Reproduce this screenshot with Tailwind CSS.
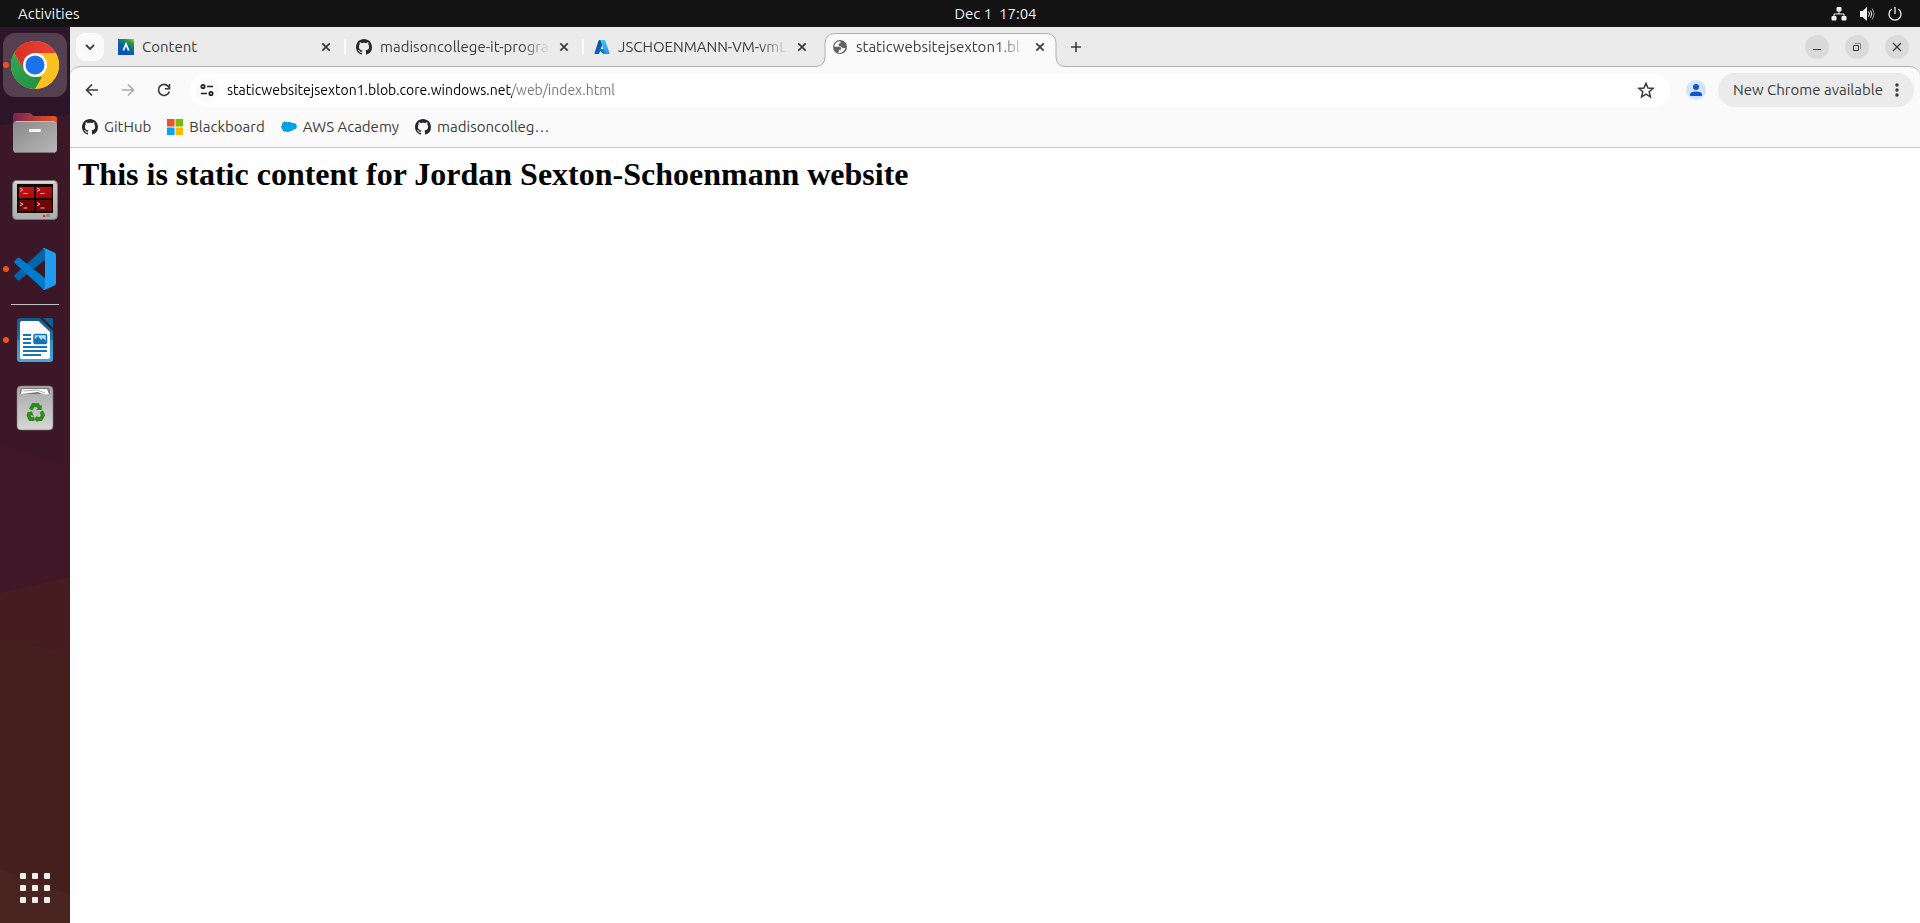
<!DOCTYPE html>
<html lang="en">
<head>
<meta charset="utf-8">
<title>staticwebsitejsexton1.blob.core.windows.net/web/index.html</title>
<script src="https://cdn.jsdelivr.net/npm/@tailwindcss/browser@4"></script>
</head>
<body class="flex h-screen flex-col overflow-hidden bg-white font-['Ubuntu','Noto_Sans',sans-serif] text-[15px] leading-5 text-[#3c3c3c]">
<svg class="hidden">
  <symbol id="github" viewBox="0 0 16 16"><path fill="#24292f" d="M8 0C3.58 0 0 3.58 0 8c0 3.54 2.29 6.53 5.47 7.59.4.07.55-.17.55-.38 0-.19-.01-.82-.01-1.49-2.01.37-2.53-.49-2.69-.94-.09-.23-.48-.94-.82-1.13-.28-.15-.68-.52-.01-.53.63-.01 1.08.58 1.23.82.72 1.21 1.87.87 2.33.66.07-.52.28-.87.51-1.07-1.78-.2-3.64-.89-3.64-3.95 0-.87.31-1.59.82-2.15-.08-.2-.36-1.02.08-2.12 0 0 .67-.21 2.2.82.64-.18 1.32-.27 2-.27.68 0 1.36.09 2 .27 1.53-1.04 2.2-.82 2.2-.82.44 1.1.16 1.92.08 2.12.51.56.82 1.27.82 2.15 0 3.07-1.87 3.75-3.65 3.95.29.25.54.73.54 1.48 0 1.07-.01 1.93-.01 2.2 0 .21.15.46.55.38A8.013 8.013 0 0016 8c0-4.42-3.58-8-8-8z"/></symbol>
  <symbol id="close" viewBox="0 0 16 16"><path d="M4.3 4.3l7.4 7.4M11.7 4.3l-7.4 7.4" fill="none" stroke="#3c3c3c" stroke-width="1.7"/></symbol>
</svg>

<header class="flex h-[27px] shrink-0 items-center bg-[#131313] text-[#f2f2f2]">
  <div class="flex-1 pl-[18px]"><button type="button">Activities</button></div>
  <time class="whitespace-pre pl-[70px]">Dec 1  17:04</time>
  <div class="flex flex-1 items-center justify-end gap-[12px] pr-[17px]">
    <svg class="size-4" viewBox="0 0 16 16" fill="#f2f2f2"><rect x="5.5" y="1" width="5" height="4.500" rx="1"/><rect x="0.500" y="10" width="5" height="4.500" rx="1"/><rect x="10.500" y="10" width="5" height="4.500" rx="1"/><path d="M8 5v3M3 10.500V8h10v2.500" fill="none" stroke="#f2f2f2"/></svg>
    <svg class="size-4" viewBox="0 0 16 16"><path fill="#f2f2f2" d="M1 5h2.500L8 1v14l-4.500-4H1z"/><path d="M9.500 5.500q2 2.500 0 5M11.500 4.500q2.500 3.500 0 7" stroke="#f2f2f2" fill="none"/><path d="M13 2.500q4 5.500 0 11" stroke="#999" fill="none"/></svg>
    <svg class="size-4" viewBox="0 0 16 16" fill="none" stroke="#f2f2f2" stroke-width="1.300"><path d="M8 1v7M4.800 3A6 6 0 1 0 11.200 3"/></svg>
  </div>
</header>

<div class="flex min-h-0 flex-1">
  <nav aria-label="Dock" class="relative flex w-[70px] shrink-0 flex-col items-center pt-[6px] pb-[20px]">
    <svg class="absolute inset-0 -z-10 size-full" viewBox="0 27 70 896" preserveAspectRatio="none">
      <defs><linearGradient id="wall" x2="0" y2="1"><stop stop-color="#2f172b"/><stop offset="1" stop-color="#2c1528"/></linearGradient></defs>
      <path fill="url(#wall)" d="M0 27h70v100H0z"/><path fill="#3b1727" d="M0 125L70 114v360H0z"/><path fill="#411727" d="M0 443l70 23v140H0z"/><path fill="#471c21" d="M0 593l70-16v100H0z"/><path fill="#451e1e" d="M0 638l70 15v270H0z"/><path fill="#492421" d="M0 869l70 26v28H0z"/>
    </svg>
    <button type="button" aria-label="Google Chrome" class="relative flex size-16 items-center justify-center rounded-xl bg-[#544050]">
      <span class="absolute left-0 size-[6px] rounded-full bg-[#e95420]"></span>
      <svg class="size-12" viewBox="0 0 48 48">
        <defs><linearGradient id="cr"><stop stop-color="#d93025"/><stop offset="1" stop-color="#ea4335"/></linearGradient><linearGradient id="cg" x1="0" y1="0" x2="1" y2="1"><stop stop-color="#34a853"/><stop offset="1" stop-color="#1e8e3e"/></linearGradient></defs>
        <circle cx="24" cy="24" r="24" fill="#fcc120"/>
        <path fill="url(#cg)" d="M3.200 12L13.600 30 24 36h10.400L24 48A24 24 0 0 1 3.200 12z"/>
        <path fill="#fcc120" d="M34.400 30L24 48a24 24 0 0 0 20.800-36H24z"/>
        <path fill="url(#cr)" d="M44.800 12A24 24 0 0 0 3.200 12l10.400 18L24 12z"/>
        <circle cx="24" cy="24" r="12" fill="#fff"/><circle cx="24" cy="24" r="9.500" fill="#1a73e8"/>
      </svg>
    </button>
    <button type="button" aria-label="Files" class="mt-[12px]">
      <svg class="size-12" viewBox="11 109 48 48"><defs><linearGradient id="fo"><stop stop-color="#77254f"/><stop offset="1" stop-color="#e95420"/></linearGradient><linearGradient id="fg" x2="1" y2="1"><stop stop-color="#888"/><stop offset="1" stop-color="#b8b8b8"/></linearGradient></defs><path fill="url(#fo)" d="M13 116q0-3 3-3h13q2 0 3 1.500l1 1.500h21q3 0 3 3v10H13z"/><rect x="13" y="121" width="44" height="32" rx="4" fill="url(#fg)"/><path d="M16 121.500h38" stroke="#c0c0c0"/><path d="M16 152.500h38" stroke="#777"/><rect x="29" y="129" width="12" height="3" rx="1" fill="#f5f5f5"/></svg>
    </button>
    <button type="button" aria-label="Terminator" class="mt-[19px]">
      <svg class="size-12" viewBox="11 176 48 48"><defs><linearGradient id="tr" x2="1" y2="1"><stop stop-color="#d01515"/><stop offset="1" stop-color="#980606"/></linearGradient><linearGradient id="tf" x2="0" y2="1"><stop stop-color="#c9cac6"/><stop offset="1" stop-color="#aeafab"/></linearGradient></defs><rect x="12.500" y="180.500" width="45" height="39" rx="4" fill="url(#tf)" stroke="#777873"/><path d="M15 182h40" stroke="#eee"/><rect x="17" y="184" width="36" height="29" fill="#190404"/><path fill="url(#tr)" d="M19 187h15v11H19zM36 187h16v11H36z"/><path fill="#6e0707" d="M19 200h15v11H19zM36 200h16v11H36z"/><path d="M20 188l3 1.700-3 1.700M23.500 193.500h4M37 188l3 1.700-3 1.700M40.500 193.500h4M20 202.500l3 1.700-3 1.700M23.500 208h4M37 202.500l3 1.700-3 1.700M40.500 208h4" fill="none" stroke="#f3b7b7"/><path fill="#f01515" d="M43 215h2v2h-2z"/><path fill="#888" d="M46 214h4v3h-4z"/></svg>
    </button>
    <button type="button" aria-label="Visual Studio Code" class="relative mt-[21px] flex w-16 justify-center">
      <span class="absolute left-0 top-[21px] size-[6px] rounded-full bg-[#e95420]"></span>
      <svg class="size-12" viewBox="-3 -3 48 48"><path fill="#0065a9" d="M31 0q-1 0-2 1L.600 27q-1 1 0 2l3 3q1 .8 2 0L31 12z"/><path fill="#007acc" d="M31 42q-1 0-2-1L.600 15q-1-1 0-2l3-3q1-.8 2 0L31 30z"/><path fill="#1f9cf0" d="M31 .200l9.500 4.300q1.500.8 1.500 2.500v28q0 1.700-1.500 2.500L31 41.800q-1.500.5-2.500-.8 2.500 1.200 2.500-2V3q0-3.200-2.500-2 1-1.300 2.500-.8z"/></svg>
    </button>
    <hr class="mt-[11px] w-12 border-[#c5bcc1]">
    <button type="button" aria-label="LibreOffice Writer" class="relative mt-[11px] flex w-16 justify-center">
      <span class="absolute left-0 top-[21px] size-[6px] rounded-full bg-[#e95420]"></span>
      <svg class="size-12" viewBox="11 316 48 48"><defs><linearGradient id="wr" x2="0" y2="1"><stop stop-color="#0f5c8b"/><stop offset=".500" stop-color="#1a74ac"/><stop offset=".510" stop-color="#2e8fc5"/><stop offset="1" stop-color="#48a5d5"/></linearGradient></defs><path fill="url(#wr)" d="M20 318h20l13 13v28q0 3-3 3H20q-3 0-3-3v-38q0-3 3-3z"/><path fill="#fff" d="M22 321h16.500L50 332v25q0 2-2 2H22q-2 0-2-2v-34q0-2 2-2z"/><path fill="#135f92" d="M43 318h8q2 0 2 2v8z"/><path stroke="#1475b2" stroke-width="2" d="M23 335h8M23 339h8M23 343h8M23 347h24M23 351h24M23 355h18"/><rect x="34" y="334.500" width="12.500" height="9" rx="1" fill="#b6def5" stroke="#1475b2" stroke-width="1.500"/><path fill="#1475b2" d="M34 343v-3l4-4 3 4 2-2 3 3v2z"/></svg>
    </button>
    <button type="button" aria-label="Trash" class="mt-[20px]">
      <svg class="size-12" viewBox="11 384 48 48"><defs><linearGradient id="tg" x2="0" y2="1"><stop stop-color="#a9a9a9"/><stop offset="1" stop-color="#d6d6d6"/></linearGradient></defs><rect x="17" y="386" width="36" height="44" rx="4" fill="url(#tg)" stroke="#777" stroke-width=".600"/><path d="M20 394v-3q0-3 3-3h24q3 0 3 3v3z" fill="#777"/><path fill="#fff" d="M22 389h25l2 5q-5 1-9-1l-2-1-17 2z"/><path d="M23 391l14-1 8 3" fill="none" stroke="#aaa"/><g transform="translate(5.600 62) scale(.85)"><g fill="none" stroke="#2c8a1e" stroke-width="4.500"><path d="M29.500 409l3-5.500h5l1.800 3"/><path d="M42 411l2 4.500-2.500 4.500h-5"/><path d="M34 420h-5l-2-4.500 1.500-3"/></g><g fill="#2c8a1e"><path d="M36 409.500h6.500V403z"/><path d="M37.500 415.500v8.500l-4-4z"/><path d="M25 412.500l6-1.500 2 6z"/></g></g></svg>
    </button>
    <button type="button" aria-label="Show Applications" class="mt-auto grid grid-cols-3 gap-[6px]">
      <i class="size-[6px] rounded-[1px] bg-[#eeeeec]"></i><i class="size-[6px] rounded-[1px] bg-[#eeeeec]"></i><i class="size-[6px] rounded-[1px] bg-[#eeeeec]"></i>
      <i class="size-[6px] rounded-[1px] bg-[#eeeeec]"></i><i class="size-[6px] rounded-[1px] bg-[#eeeeec]"></i><i class="size-[6px] rounded-[1px] bg-[#eeeeec]"></i>
      <i class="size-[6px] rounded-[1px] bg-[#eeeeec]"></i><i class="size-[6px] rounded-[1px] bg-[#eeeeec]"></i><i class="size-[6px] rounded-[1px] bg-[#eeeeec]"></i>
    </button>
  </nav>

  <div class="flex min-w-0 flex-1 flex-col bg-[#ebebeb]">
    <div class="flex h-[39px] shrink-0 items-center pl-[6px]">
      <button type="button" aria-label="Search tabs" class="mr-[7px] flex size-7 items-center justify-center rounded-[9px] bg-[#fafafa]"><svg class="size-4" viewBox="0 0 16 16" fill="none" stroke="#3c3c3c" stroke-width="1.800"><path d="M4 6l4 4 4-4"/></svg></button>
      <div role="tablist" class="flex h-full">
        <div class="relative flex h-full w-[238px] items-center pl-[7px]">
          <button role="tab" type="button" class="flex w-[192px] items-center gap-2 whitespace-nowrap">
            <svg class="size-4 shrink-0" viewBox="0 0 16 16"><defs><linearGradient id="d2" x1="1" y1="0" x2=".400" y2="1"><stop stop-color="#a5d61f"/><stop offset=".250" stop-color="#2b9a3c"/><stop offset=".550" stop-color="#0a6a8c"/><stop offset=".850" stop-color="#0a52c4"/></linearGradient></defs><path fill="url(#d2)" d="M0 0h16v16H0z"/><path d="M5.300 11.500L8 5l2.700 6.500" fill="none" stroke="#fff" stroke-width="1.800"/></svg>
            Content</button>
          <button type="button" aria-label="Close Content" class="ml-[8px]"><svg class="size-4"><use href="#close"/></svg></button>
          <span class="absolute right-[3px] h-4 w-[2px] rounded bg-[#fafafa]"></span>
        </div>
        <div class="relative flex h-full w-[238px] items-center pl-[7px]">
          <button role="tab" type="button" class="flex w-[192px] items-center gap-2 whitespace-nowrap [mask-image:linear-gradient(to_right,black_166px,transparent_194px)]">
            <svg class="size-4 shrink-0"><use href="#github"/></svg>
            madisoncollege-it-progra</button>
          <button type="button" aria-label="Close madisoncollege" class="ml-[8px]"><svg class="size-4"><use href="#close"/></svg></button>
          <span class="absolute right-[3px] h-4 w-[2px] rounded bg-[#fafafa]"></span>
        </div>
        <div class="relative flex h-full w-[238px] items-center pl-[7px]">
          <button role="tab" type="button" class="flex w-[192px] items-center gap-2 whitespace-nowrap [mask-image:linear-gradient(to_right,black_166px,transparent_194px)]">
            <svg class="size-4 shrink-0" viewBox="0 0 16 16"><defs><linearGradient id="az" x2="0" y2="1"><stop stop-color="#114a8b"/><stop offset="1" stop-color="#0669bc"/></linearGradient><linearGradient id="az2" x2="0" y2="1"><stop stop-color="#3ccbf4"/><stop offset="1" stop-color="#2892df"/></linearGradient></defs><path fill="url(#az)" d="M5.500 1h4.300L5.300 14.300q-.200.700-1 .700H1.200q-1 0-.7-1L4.600 1.700Q4.800 1 5.500 1z"/><path fill="#0078d4" d="M11.700 10.100H5q-.600.200-.2.700l4.300 4q.300.200.7.200h3.800z"/><path fill="url(#az2)" d="M11.300 1.700Q11 1 10.400 1H5.600q.7 0 .9.700l4.200 12.300q.200 1-.7 1h4.700q1 0 .8-1z"/></svg>
            JSCHOENMANN-VM-vmL</button>
          <button type="button" aria-label="Close JSCHOENMANN-VM" class="ml-[8px]"><svg class="size-4"><use href="#close"/></svg></button>
        </div>
        <div class="relative z-10 flex h-full w-[238px] items-center pl-[7px]">
          <svg class="absolute top-[6px] -left-[10px] h-[34px] w-[251px]" viewBox="0 0 251 34"><path fill="#fafafa" d="M0 34v-.5q10 0 10-10V10.500Q10 .500 20 .500h211q10 0 10 10v13q0 10 10 10v.5z"/><path fill="none" stroke="#b0b0b0" d="M0 33.500q10 0 10-10V10.500Q10 .500 20 .500h211q10 0 10 10v13q0 10 10 10"/></svg>
          <button role="tab" aria-selected="true" type="button" class="relative flex w-[192px] items-center gap-2 whitespace-nowrap [mask-image:linear-gradient(to_right,black_166px,transparent_194px)]">
            <svg class="size-4 shrink-0" viewBox="0 0 16 16"><circle cx="8" cy="8" r="7" fill="#5f6368"/><path fill="#fafafa" d="M8.500 2.200Q4 2 2.600 6l-.2 1.800h5q1.600 0 1.800 1.600v1q-2.200 0-2.200 1.200 0 1-.8 2.100l1.400.2q2.400 0 4-1.700 1.300-1.400 1.800-3.200h-2.600q-1.300-.2-1.500-1.500h-1q-1.600-.2-1.700-2 .2-1.300 1.900-1.300z"/></svg>
            staticwebsitejsexton1.bl</button>
          <button type="button" aria-label="Close staticwebsitejsexton1" class="relative ml-[8px]"><svg class="size-4"><use href="#close"/></svg></button>
        </div>
      </div>
      <button type="button" aria-label="New tab" class="ml-[5px]"><svg class="size-4" viewBox="0 0 16 16" stroke="#3c3c3c" stroke-width="1.600"><path d="M8 3v10M3 8h10"/></svg></button>
      <div class="ml-auto flex gap-4 pr-[11px]">
        <button type="button" aria-label="Minimize" class="size-6 rounded-full bg-[#dadada]"><svg class="size-6" viewBox="0 0 24 24"><path d="M8 14.500h8" stroke="#3c3c3c"/></svg></button>
        <button type="button" aria-label="Restore" class="size-6 rounded-full bg-[#dadada]"><svg class="size-6" viewBox="0 0 24 24" fill="none"><path d="M8.500 10.500h5v5h-5z" stroke="#3c3c3c"/><path d="M10 8.500h5.500V14" stroke="#888"/></svg></button>
        <button type="button" aria-label="Close window" class="size-6 rounded-full bg-[#dadada]"><svg class="size-6" viewBox="0 0 24 24" stroke="#3c3c3c" stroke-width="1.300"><path d="M8 8l8 8M16 8l-8 8"/></svg></button>
      </div>
    </div>

    <div class="shrink-0 rounded-t-[10px] border-t border-b border-t-[#b0b0b0] border-b-[#c8c8c8] bg-[#fafafa]">
      <div class="flex h-[46px] items-center pl-[12px] pr-[6px]">
        <button type="button" aria-label="Back"><svg class="size-5" viewBox="0 0 20 20" fill="none" stroke="#3c3c3c" stroke-width="1.700"><path d="M16 10H5M10 4.500L4.500 10l5.500 5.500"/></svg></button>
        <button type="button" aria-label="Forward" class="ml-4"><svg class="size-5" viewBox="0 0 20 20" fill="none" stroke="#acacac" stroke-width="1.700"><path d="M4 10h11M10 4.500l5.500 5.500-5.500 5.500"/></svg></button>
        <button type="button" aria-label="Reload" class="ml-4"><svg class="size-5" viewBox="0 0 20 20" fill="none" stroke="#3c3c3c" stroke-width="1.700"><path d="M15.300 11.500a5.500 5.500 0 1 1-1.100-5.100L15.500 8"/><path fill="#3c3c3c" stroke="none" d="M16.300 4v5.500h-5.500V7.900h3.900V4z"/></svg></button>
        <div class="ml-[16px] flex h-[34px] flex-1 items-center rounded-full bg-white pr-[14px] pl-[5px]">
          <button type="button" aria-label="View site information" class="flex size-6 items-center justify-center rounded-full bg-[#fafafa]"><svg class="size-4" viewBox="0 0 16 16" fill="none" stroke="#1f1f1f" stroke-width="1.700"><circle cx="4" cy="4.500" r="1.700"/><path d="M8 4.500h6M2 11.500h6"/><circle cx="12" cy="11.500" r="1.700"/></svg></button>
          <input type="text" aria-label="Address" value="staticwebsitejsexton1.blob.core.windows.net/web/index.html" class="ml-[8px] min-w-0 flex-1 bg-[linear-gradient(to_right,#000_285px,#757575_285px)] bg-clip-text text-sm text-transparent outline-none">
          <button type="button" aria-label="Bookmark this tab"><svg class="size-5" viewBox="0 0 20 20" fill="none" stroke="#3c3c3c" stroke-width="1.500"><path d="M10 3.300l2 4.700 5.100.4-3.900 3.400 1.200 5-4.400-2.700-4.400 2.700 1.200-5-3.900-3.400L8 8z"/></svg></button>
        </div>
        <button type="button" aria-label="Profile" class="ml-[16px]"><svg class="size-5" viewBox="0 0 20 20"><circle cx="10" cy="10" r="10" fill="#d3e3fd"/><circle cx="10" cy="7" r="3" fill="#0b57d0"/><path fill="#0b57d0" d="M4 16v-1.500Q4 11.500 10 11.500t6 3V16z"/></svg></button>
        <button type="button" class="ml-[12px] flex h-[34px] w-[196px] items-center justify-between rounded-full bg-[#ebebeb] pr-[9px] pl-[15px] whitespace-nowrap">New Chrome available<svg class="size-4" viewBox="0 0 16 16" fill="#3c3c3c"><circle cx="8" cy="3" r="1.700"/><circle cx="8" cy="8" r="1.700"/><circle cx="8" cy="13" r="1.700"/></svg></button>
      </div>
      <div class="flex h-[34px] items-start gap-[16px] pt-[4px] pl-[12px]">
        <a href="#" class="flex items-center gap-[6px]"><svg class="size-4"><use href="#github"/></svg>GitHub</a>
        <a href="#" class="flex items-center gap-[6px]"><svg class="size-4" viewBox="0 0 16 16"><path fill="#f25022" d="M0 0h7.500v7.500H0z"/><path fill="#7fba00" d="M8.500 0H16v7.500H8.500z"/><path fill="#00a4ef" d="M0 8.500h7.500V16H0z"/><path fill="#ffb900" d="M8.500 8.500H16V16H8.500z"/></svg>Blackboard</a>
        <a href="#" class="flex items-center gap-[6px]"><svg class="size-4" viewBox="0 0 16 16" fill="#00a1e0"><path d="M1 6Q.700 3 3.500 2.500q2-.3 3 1Q8 2 10 3.500q1.200.2 1.300.7 4-.7 4.500 3 .1 3.500-3.800 3.500-1 1.700-3 1-1.500 2.700-4 .5-1 1-2.500.1-1.200-.6-.8-1.600Q-.900 8 1 6z"/></svg>AWS Academy</a>
        <a href="#" class="flex items-center gap-[6px]"><svg class="size-4"><use href="#github"/></svg>madisoncolleg…</a>
      </div>
    </div>

    <main class="flex-1 bg-white p-2">
      <h1 class="font-['Liberation_Serif','Times_New_Roman',serif] text-[32px] leading-[37px] font-bold text-black">This is static content for Jordan Sexton-Schoenmann website</h1>
    </main>
  </div>
</div>
</body>
</html>
